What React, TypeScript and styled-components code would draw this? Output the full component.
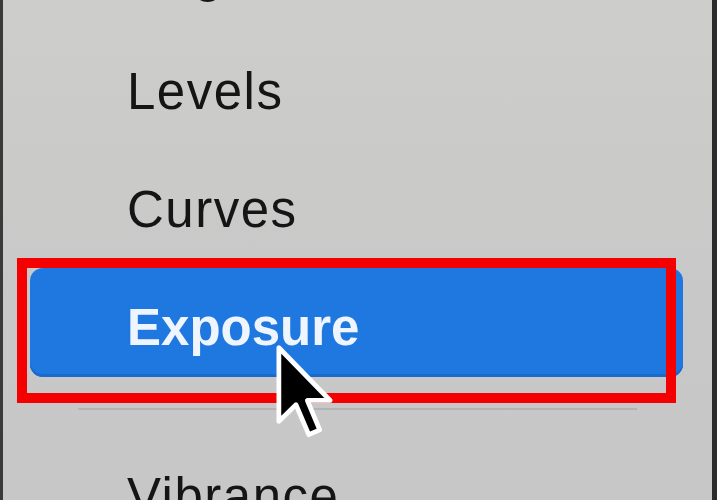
import React from "react";
import styled, { createGlobalStyle } from "styled-components";

const GlobalStyle = createGlobalStyle`
  html, body {
    margin: 0;
    padding: 0;
    background: #c9cac8;
    overflow: hidden;
  }
`;

interface MenuEntry {
  label: string;
  active?: boolean;
  dividerAfter?: boolean;
}

const entries: MenuEntry[] = [
  { label: "Brightness/Contrast..." },
  { label: "Levels" },
  { label: "Curves" },
  { label: "Exposure", active: true, dividerAfter: true },
  { label: "Vibrance" },
];

// macOS style pointer, black with a white rim
const Cursor: React.FC = () => (
  <StCursor width="62" height="95" viewBox="-1 -1 13 20">
    <path
      d="M0 0 L0 15.5 L3.6 12 L6.3 18.3 L8.6 17.3 L6 11.1 L10.8 11.1 Z"
      fill="#000"
      stroke="#fff"
      strokeWidth="1"
      strokeLinejoin="round"
    />
  </StCursor>
);

const App: React.FC = () => {
  return (
    <>
      <GlobalStyle />
      <StMenu>
        <StList>
          {entries.map((entry) => (
            <React.Fragment key={entry.label}>
              <StItem $active={entry.active}>
                <StLabel $active={entry.active}>{entry.label}</StLabel>
                {entry.active && (
                  <>
                    <StCallout />
                    <Cursor />
                  </>
                )}
              </StItem>
              {entry.dividerAfter && <StDivider />}
            </React.Fragment>
          ))}
        </StList>
      </StMenu>
    </>
  );
};

export default App;

const StMenu = styled.div`
  box-sizing: border-box;
  width: 717px;
  height: 500px;
  overflow: hidden;
  border-left: 3px solid #3a3a3a;
  border-right: 5px solid #2b2b2b;
  background: linear-gradient(180deg, #cdcecb 0%, #c8c8c8 60%, #c7c7c7 100%);
`;

const StList = styled.ul`
  display: flex;
  flex-direction: column;
  margin: -86px 0 0 0;
  padding: 0;
  list-style-type: none;
`;

const StItem = styled.li<{ $active?: boolean }>`
  position: relative;
  box-sizing: border-box;
  height: 109px;
  margin: 0 29px 9px 27px;
  padding: 10px 0 0 97px;
  border-radius: 13px;
  background-color: ${({ $active }) => ($active ? "#1f78e0" : "transparent")};
  box-shadow: ${({ $active }) =>
    $active ? "inset 0 -3px 0 #1a69cc" : "none"};
`;

const StLabel = styled.span<{ $active?: boolean }>`
  display: block;
  line-height: 99px;
  font-family: "Liberation Sans", Arial, sans-serif;
  font-size: 51px;
  font-weight: ${({ $active }) => ($active ? 700 : 400)};
  letter-spacing: ${({ $active }) => ($active ? "0" : "1.5px")};
  color: ${({ $active }) => ($active ? "#eef5ff" : "#151515")};
  white-space: nowrap;
`;

const StCallout = styled.div`
  position: absolute;
  left: -13px;
  top: -10px;
  box-sizing: border-box;
  width: 659px;
  height: 145px;
  border: 10px solid #f50000;
  pointer-events: none;
`;

const StCursor = styled.svg`
  position: absolute;
  left: 244px;
  top: 75px;
  overflow: visible;
`;

const StDivider = styled.li`
  height: 2px;
  margin: 22px 75px 27px 75px;
  width: 559px;
  background-color: #b3b3b3;
`;
